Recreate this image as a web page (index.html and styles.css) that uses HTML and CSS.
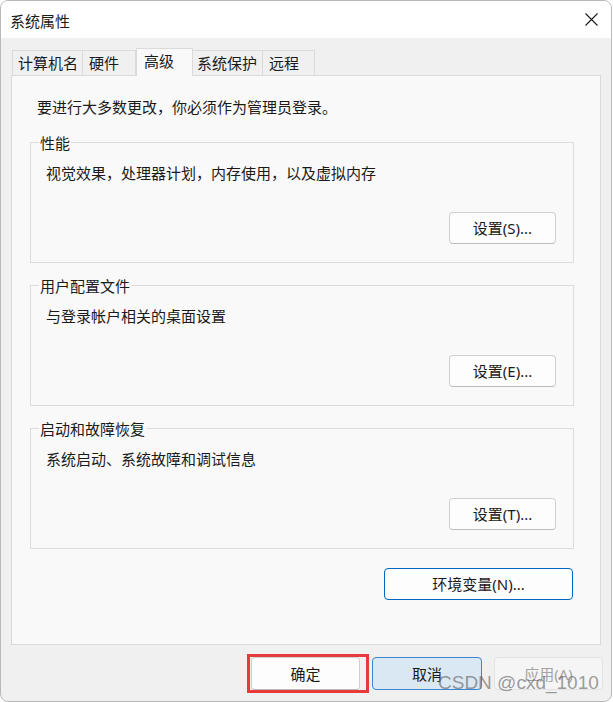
FILE: index.html
```html
<!DOCTYPE html>
<html lang="zh-CN">
<head>
<meta charset="utf-8">
<title>系统属性</title>
<link rel="stylesheet" href="styles.css">
</head>
<body>
<div class="window">
  <div class="titlebar">
    <span class="title">系统属性</span>
    <svg class="close" width="13" height="13" viewBox="0 0 13 13"><path d="M0.5 0.5 L12.5 12.5 M12.5 0.5 L0.5 12.5" stroke="#1a1a1a" stroke-width="1.1" fill="none"/></svg>
  </div>
  <div class="tabs">
    <div class="tab t1">计算机名</div>
    <div class="tab t2">硬件</div>
    <div class="tab t3 active">高级</div>
    <div class="tab t4">系统保护</div>
    <div class="tab t5">远程</div>
  </div>
  <div class="panel">
    <div class="notice">要进行大多数更改，你必须作为管理员登录。</div>
    <div class="groups">
      <div class="group">
        <div class="legend">性能</div>
        <div class="desc">视觉效果，处理器计划，内存使用，以及虚拟内存</div>
        <button class="btn gbtn">设置(S)...</button>
      </div>
      <div class="group">
        <div class="legend">用户配置文件</div>
        <div class="desc">与登录帐户相关的桌面设置</div>
        <button class="btn gbtn">设置(E)...</button>
      </div>
      <div class="group">
        <div class="legend">启动和故障恢复</div>
        <div class="desc">系统启动、系统故障和调试信息</div>
        <button class="btn gbtn">设置(T)...</button>
      </div>
    </div>
    <button class="btn envbtn">环境变量(N)...</button>
  </div>
  <div class="footer">
    <button class="btn fbtn ok">确定</button>
    <button class="btn fbtn cancel">取消</button>
    <button class="btn fbtn apply">应用(A)</button>
  </div>
  <div class="redbox"></div>
  <div class="watermark">CSDN @cxd_1010</div>
</div>
</body>
</html>
```
FILE: styles.css
```css
html, body {
  margin: 0;
  padding: 0;
  background: #ffffff;
}
body {
  font-family: "Noto Sans", "Noto Sans CJK SC", sans-serif;
  font-size: 15px;
  color: #1a1a1a;
}
.window {
  position: relative;
  width: 612px;
  height: 702px;
  box-sizing: border-box;
  border: 1px solid #b9b9b9;
  border-radius: 8px;
  background: #f0f0f0;
  overflow: hidden;
}
.titlebar {
  height: 37px;
  background: #ffffff;
  display: flex;
  align-items: center;
  justify-content: space-between;
  padding: 0 13px 0 9px;
}
.title {
  font-size: 15px;
  line-height: 20px;
  margin-top: 2px;
}
.close {
  display: block;
}
.tabs {
  margin-top: 10px;
  height: 27px;
  padding-left: 11px;
  display: flex;
  align-items: flex-end;
}
.tab {
  position: relative;
  z-index: 1;
  height: 25px;
  box-sizing: border-box;
  border: 1px solid #dadada;
  border-bottom: none;
  background: #f0f0f0;
  line-height: 24px;
  white-space: nowrap;
}
.tab.active {
  height: 28px;
  margin-bottom: -1px;
  background: #f9f9f9;
}
.t1 { width: 71px; padding-left: 5px; }
.t2 { width: 53px; padding-left: 6px; border-left: none; }
.t3 { width: 57px; padding-left: 7px; }
.t4 { width: 70px; padding-left: 4px; border-left: none; }
.t5 { width: 52px; padding-left: 6px; border-left: none; }
.panel {
  margin-left: 10px;
  width: 590px;
  height: 570px;
  box-sizing: border-box;
  border: 1px solid #dadada;
  background: #f9f9f9;
  padding: 21px 26px 0 18px;
  display: flex;
  flex-direction: column;
}
.notice {
  line-height: 20px;
  margin-left: 7px;
}
.groups {
  margin-top: 25px;
  display: flex;
  flex-direction: column;
  gap: 22px;
}
.group {
  height: 121px;
  box-sizing: border-box;
  border: 1px solid #dcdcdc;
  padding: 0 17px 18px 15px;
  display: flex;
  flex-direction: column;
}
.legend {
  align-self: flex-start;
  margin-top: -10px;
  margin-left: -7px;
  padding: 0 1px;
  background: #f9f9f9;
  line-height: 20px;
}
.desc {
  margin-top: 10px;
  line-height: 20px;
}
.btn {
  font-family: "Noto Sans", "Noto Sans CJK SC", sans-serif;
  font-size: 15px;
  color: #1a1a1a;
  background: #fdfdfd;
  border: 1px solid #d0d0d0;
  border-bottom-color: #bcbcbc;
  border-radius: 4px;
  box-sizing: border-box;
  padding: 0;
  line-height: 20px;
}
.gbtn {
  margin-top: auto;
  align-self: flex-end;
  width: 107px;
  height: 32px;
}
.envbtn {
  margin-top: 19px;
  margin-right: 1px;
  align-self: flex-end;
  width: 189px;
  height: 32px;
  border: 1px solid #0067c0;
}
.footer {
  margin-top: 12px;
  padding-right: 8px;
  display: flex;
  justify-content: flex-end;
  gap: 12px;
}
.fbtn {
  height: 33px;
  width: 109px;
}
.cancel {
  width: 110px;
  background: #dae8f4;
  border: 1px solid #3a86d0;
}
.apply {
  background: #f5f5f5;
  border: 1px solid #e3e3e3;
  color: #a3a3a3;
}
.redbox {
  position: absolute;
  left: 246px;
  top: 653px;
  width: 122px;
  height: 39px;
  box-sizing: border-box;
  border: 3px solid #e83a3a;
}
.watermark {
  position: absolute;
  left: 437px;
  top: 671px;
  font-family: "Liberation Sans", sans-serif;
  font-size: 19px;
  line-height: 22px;
  color: rgba(95, 95, 95, 0.62);
  white-space: nowrap;
}
```
